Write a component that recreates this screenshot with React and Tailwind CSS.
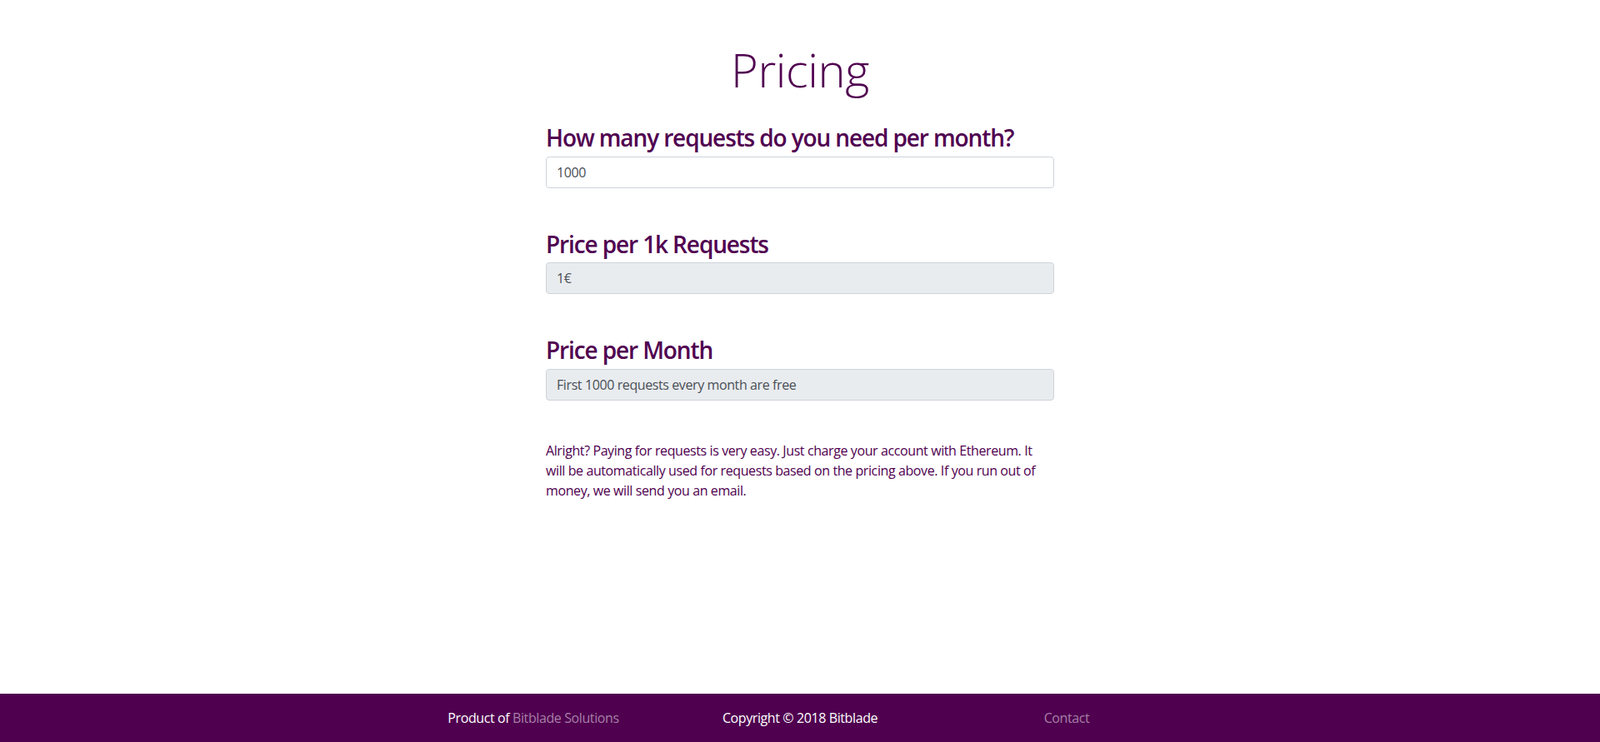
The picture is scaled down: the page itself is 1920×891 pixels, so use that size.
import React, { useState } from "react";

const purple = "text-[#500050]";

const Field = ({ label, value, onChange, disabled }) => (
  <div>
    <h3 className={`text-[28px] font-semibold leading-[1.2] tracking-[-0.04em] mb-[5px] ${purple}`}>{label}</h3>
    <input
      type="text"
      value={value}
      onChange={onChange}
      readOnly={disabled}
      className={`block w-full h-[38px] px-3 text-base tracking-[-0.025em] text-[#495057] border border-[#ced4da] rounded-[4px] outline-none ${
        disabled ? "bg-[#e9ecef]" : "bg-white"
      }`}
    />
  </div>
);

export default function App() {
  const [requests, setRequests] = useState("1000");

  return (
    <div className="min-h-screen flex flex-col bg-white tracking-[-0.025em] font-['Segoe_UI','Open_Sans',sans-serif]">
      <main className="flex-1">
        <div className="w-[610px] mx-auto pt-[50px]">
          <h1 className={`text-center text-[56px] font-light leading-[1.2] ${purple}`}>Pricing</h1>

          {/* 입력 영역 */}
          <div className="mt-[32px] flex flex-col gap-[51px]">
            <Field
              label="How many requests do you need per month?"
              value={requests}
              onChange={(e) => setRequests(e.target.value)}
            />
            <Field label="Price per 1k Requests" value="1€" disabled />
            <Field label="Price per Month" value="First 1000 requests every month are free" disabled />
          </div>

          <p className={`mt-[48px] text-base leading-6 ${purple}`}>
            Alright? Paying for requests is very easy. Just charge your account with Ethereum. It will be
            automatically used for requests based on the pricing above. If you run out of money, we will send you
            an email.
          </p>
        </div>
      </main>

      <footer className="h-[58px] bg-[#4f004f] flex items-center">
        <div className="w-[960px] mx-auto grid grid-cols-3 text-center text-base text-white">
          <div>
            Product of{" "}
            <a href="#" className="text-[#a77fa7]">
              Bitblade Solutions
            </a>
          </div>
          <div>Copyright © 2018 Bitblade</div>
          <div>
            <a href="#" className="text-[#a77fa7]">
              Contact
            </a>
          </div>
        </div>
      </footer>
    </div>
  );
}
